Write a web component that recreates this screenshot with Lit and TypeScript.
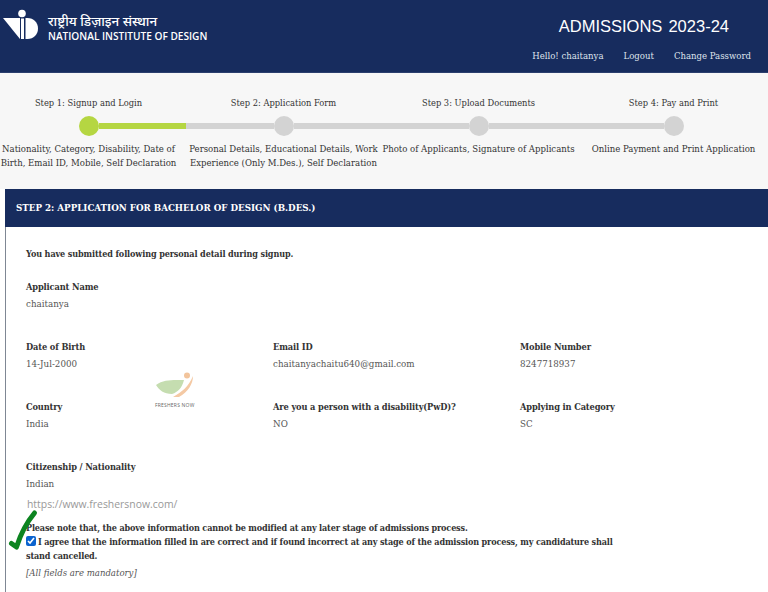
import { LitElement, html, css } from "lit";
import { customElement } from "lit/decorators.js";

const steps = [
  { t: "Step 1: Signup and Login", d: "Nationality, Category, Disability, Date of Birth, Email ID, Mobile, Self Declaration" },
  { t: "Step 2: Application Form", d: "Personal Details, Educational Details, Work Experience (Only M.Des.), Self Declaration" },
  { t: "Step 3: Upload Documents", d: "Photo of Applicants, Signature of Applicants" },
  { t: "Step 4: Pay and Print", d: "Online Payment and Print Application" },
];
const rows = [
  [["Applicant Name", "chaitanya"]],
  [["Date of Birth", "14-Jul-2000"], ["Email ID", "chaitanyachaitu640@gmail.com"], ["Mobile Number", "8247718937"]],
  [["Country", "India"], ["Are you a person with a disability(PwD)?", "NO"], ["Applying in Category", "SC"]],
  [["Citizenship / Nationality", "Indian"]],
];

@customElement("app-root")
export class AppRoot extends LitElement {
  static styles = css`
    :host { display: block; width: 768px; height: 592px; overflow: hidden; background: #fff; position: relative;
      font-family: "DejaVu Serif Condensed", "DejaVu Serif", serif; font-stretch: condensed; font-size: 9.5px; color: #333; }
    .top { height: 73px; background: #172c5e; display: flex; justify-content: space-between; color: #fff; box-sizing: border-box; border-bottom: 1px solid #2c3f6e; }
    .brand { display: flex; gap: 9px; padding: 9px 0 0 2px; }
    .brand svg { width: 37px; height: 32px; }
    .names { display: flex; flex-direction: column; padding-top: 5px; }
    .hi { font-family: "Noto Sans", "Noto Sans Devanagari", "Noto Sans CJK SC", sans-serif; font-size: 13.4px; line-height: 15px; font-weight: 500; }
    .en { font-family: "Open Sans", sans-serif; font-stretch: normal; font-size: 10.1px; font-weight: 600; line-height: 13px; margin-top: 1px; }
    .right { display: flex; flex-direction: column; align-items: flex-end; padding-right: 17px; }
    .adm { font-family: "Liberation Sans", sans-serif; font-stretch: normal; font-size: 16.5px; word-spacing: 1.5px; line-height: 20px; margin-top: 16px; padding-right: 22px; }
    .links { display: flex; gap: 20px; margin-top: 13px; font-size: 9.5px; color: #dfe3ec; line-height: 14px; }
    .steps { height: 116px; background: #f7f7f7; overflow: hidden; }
    .grid { display: grid; grid-template-columns: repeat(4, 195px); margin-left: -9px; width: 780px; padding-top: 23px; }
    .step { display: flex; flex-direction: column; align-items: stretch; text-align: center; }
    .st { line-height: 14px; font-size: 9.25px; }
    .track { display: flex; align-items: center; height: 20px; margin-top: 6px; }
    .bar { flex: 1; height: 6px; background: #d3d3d3; }
    .bar.none { background: transparent; }
    .bar.on { background: #b5d642; }
    .dot { width: 20px; height: 20px; border-radius: 50%; background: #d3d3d3; flex: none; }
    .dot.on { background: #b5d642; }
    .sd { line-height: 14px; margin-top: 6px; }
    .card { margin-left: 5px; border-left: 1px solid #7f8794; height: 403px; position: relative; }
    .ch { height: 37px; margin-left: -1px; background: #172c5e; color: #fff; font-weight: 700; font-size: 9.7px; display: flex; align-items: center; padding: 0 0 1px 11px; }
    .cb { padding: 20px 0 0 20px; }
    .lead { font-weight: 700; line-height: 14px; font-size: 9px; letter-spacing: -.12px; }
    .row { display: grid; grid-template-columns: repeat(3, 247px); height: 60px; }
    .rows { margin-top: 19px; }
    .l { font-weight: 700; line-height: 14px; font-size: 9.2px; letter-spacing: -.13px; }
    .v { line-height: 14px; margin-top: 3px; color: #555; font-size: 9.7px; }
    .url { font-family: "Open Sans", sans-serif; font-stretch: normal; font-size: 10.4px; color: #999; line-height: 16px; margin: -24px 0 0 1px; }
    .note { font-weight: 700; line-height: 14px; margin-top: 9px; width: 600px; font-size: 9px; letter-spacing: -.16px; }
    .agree { font-weight: 700; line-height: 14px; width: 600px; font-size: 9px; letter-spacing: -.16px; }
    .agree input { width: 10px; height: 10px; margin: 0 2px 0 0; vertical-align: -1px; accent-color: #0b63ce; }
    .req { font-style: italic; line-height: 14px; margin-top: 3px; color: #555; }
    .wm { position: absolute; left: 150px; top: 370px; width: 52px; height: 42px; }
    .wm span { position: absolute; left: 5px; top: 32px; font-family: "Open Sans", sans-serif; font-stretch: normal; font-size: 5px; color: #666; white-space: nowrap; letter-spacing: .2px; }
    .wm svg { width: 52px; height: 32px; }
    .tick { position: absolute; left: 6px; top: 508px; width: 34px; height: 44px; }
  `;
  render() {
    return html`
      <div class="top">
        <div class="brand">
          <svg viewBox="0 0 37 32"><path d="M1 9h17v21z" fill="#fff"/><circle cx="20" cy="4.500" r="3.800" fill="#fff"/><path d="M19 9.500h3v20.500h-3z" fill="#fff"/><path d="M23.500 9h2c6 0 10.500 4.500 10.500 10.500s-4.500 10.500-10.500 10.500h-2z" fill="#fff"/></svg>
          <div class="names"><span class="hi">राष्ट्रीय डिज़ाइन संस्थान</span><span class="en">NATIONAL INSTITUTE OF DESIGN</span></div>
        </div>
        <div class="right">
          <div class="adm">ADMISSIONS 2023-24</div>
          <div class="links"><span>Hello! chaitanya</span><span>Logout</span><span>Change Password</span></div>
        </div>
      </div>
      <div class="steps"><div class="grid">
        ${steps.map((s, i) => html`<div class="step">
          <div class="st">${s.t}</div>
          <div class="track"><div class="bar ${i === 0 ? "none" : ""}"></div><div class="dot ${i === 0 ? "on" : ""}"></div><div class="bar ${i === 3 ? "none" : i === 0 ? "on" : ""}"></div></div>
          <div class="sd">${s.d}</div>
        </div>`)}
      </div></div>
      <div class="card">
        <div class="ch">STEP 2: APPLICATION FOR BACHELOR OF DESIGN (B.DES.)</div>
        <div class="cb">
          <div class="lead">You have submitted following personal detail during signup.</div>
          <div class="rows">
            ${rows.map((r) => html`<div class="row">${r.map((f) => html`<div><div class="l">${f[0]}</div><div class="v">${f[1]}</div></div>`)}</div>`)}
          </div>
          <div class="url">https://www.freshersnow.com/</div>
          <div class="note">Please note that, the above information cannot be modified at any later stage of admissions process.</div>
          <div class="agree"><input type="checkbox" checked />I agree that the information filled in are correct and if found incorrect at any stage of the admission process, my candidature shall stand cancelled.</div>
          <div class="req">[All fields are mandatory]</div>
        </div>
      </div>
      <div class="wm">
        <svg viewBox="0 0 52 32"><path d="M6 15C14 9 24 10 34 10C32 18 28 22 22 24C14 24 9 20 6 15Z" fill="#c5ddb0"/><circle cx="37" cy="5.500" r="3" fill="#f2c49c"/><path d="M23 27C32 22 39 16 43 6C43 14 38 22 29 27Z" fill="#f4c9a4"/></svg>
        <span>FRESHERS NOW</span>
      </div>
      <svg class="tick" viewBox="0 0 34 44"><path d="M5.500 35.500L10.500 39C14 28 21 14 28.500 5" fill="none" stroke="#0c8420" stroke-width="5" stroke-linecap="round" stroke-linejoin="round"/></svg>
    `;
  }
}
